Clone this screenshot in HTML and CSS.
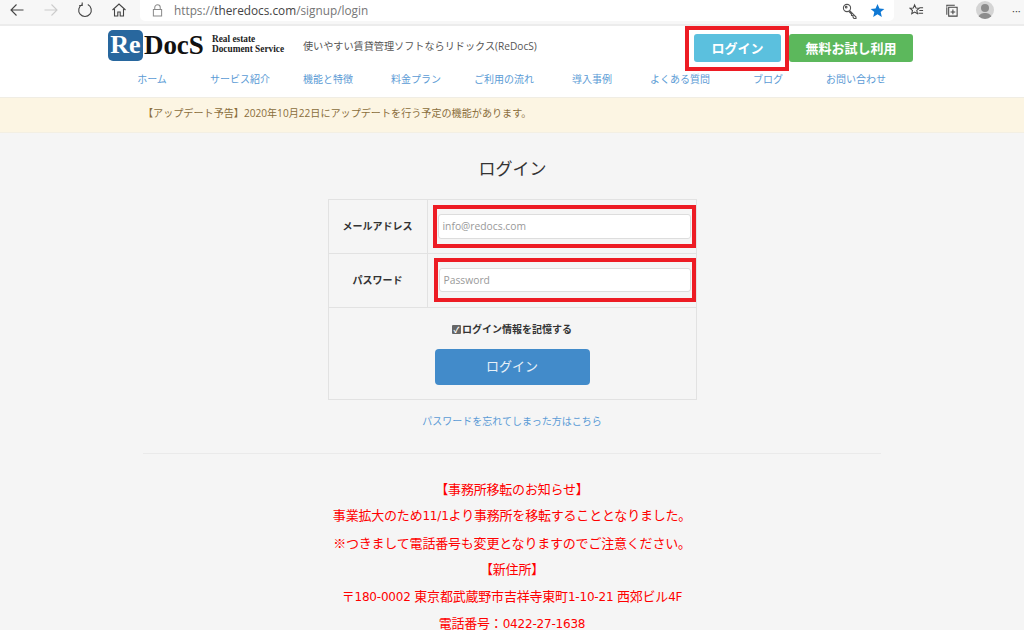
FILE: index.html
```html
<!DOCTYPE html>
<html lang="ja">
<head>
<meta charset="utf-8">
<title>ログイン</title>
<link rel="stylesheet" href="styles.css">
</head>
<body>
<div class="browser">
  <div class="nav-icons">
    <svg class="ico ico-back" viewBox="0 0 16 16"><path d="M14.500 8H2M7.500 2.500 2 8l5.500 5.500"/></svg>
    <svg class="ico ico-fwd" viewBox="0 0 16 16"><path d="M1.500 8H14M8.500 2.500 14 8l-5.500 5.500"/></svg>
    <svg class="ico ico-reload" viewBox="0 0 16 16"><path d="M5.200 2.600A6.300 6.300 0 1 0 10.800 2.600M5.200.5v3h-3"/></svg>
    <svg class="ico ico-home" viewBox="0 0 16 16"><path d="M1.500 8 8 2l6.500 6M3.500 7v7h3.300v-4h2.400v4h3.300V7"/></svg>
  </div>
  <div class="address">
    <svg class="ico-lock" viewBox="0 0 12 14"><path d="M3 6V3.800a3 3 0 0 1 6 0V6M1.500 6h9v7h-9z"/></svg>
    <span class="url">https://<b>theredocs.com</b>/signup/login</span>
    <svg class="ico-key" viewBox="0 0 16 16"><circle cx="5" cy="5" r="3.600"/><circle cx="4.200" cy="4.200" r=".8"/><path d="m7.700 7.700 6.300 6.300v1.500h-2L11 14v-1.500H9.500V11L7 8.500"/></svg>
    <svg class="ico-star" viewBox="0 0 16 16"><path d="m8 1 2.100 4.800 5.200.5-3.900 3.400 1.200 5.100L8 12.100l-4.600 2.700 1.200-5.100L.7 6.300l5.200-.5z"/></svg>
  </div>
  <div class="tools">
    <svg class="ico ico-fav" viewBox="0 0 16 16"><path d="m6 2 1.400 3.300 3.600.3-2.700 2.300.8 3.500L6 9.700 2.900 11.500l.8-3.500L1 5.600l3.600-.3zM11 5h4M11 8h4M10 11h5"/></svg>
    <svg class="ico ico-coll" viewBox="0 0 16 16"><path d="M3 4V2.500h8.500M5 4.500h9V14H5zM3 4.500v8M9.500 7v5M7 9.500h5"/></svg>
    <span class="avatar"><i class="avatar-head"></i><i class="avatar-body"></i></span>
    <span class="more">···</span>
  </div>
</div>

<header class="site-header">
  <div class="header-top">
    <div class="logo">
      <span class="logo-re">Re</span><span class="logo-docs">DocS</span>
      <span class="logo-sub">Real estate<br>Document Service</span>
    </div>
    <p class="tagline">使いやすい賃貸管理ソフトならリドックス(ReDocS)</p>
    <div class="header-buttons">
      <div class="red-frame frame-login"><a class="btn btn-login">ログイン</a></div>
      <a class="btn btn-trial">無料お試し利用</a>
    </div>
  </div>
  <nav class="main-nav">
    <a>ホーム</a><a>サービス紹介</a><a>機能と特徴</a><a>料金プラン</a><a>ご利用の流れ</a><a>導入事例</a><a>よくある質問</a><a>ブログ</a><a>お問い合わせ</a>
  </nav>
</header>

<div class="notice">【アップデート予告】2020年10月22日にアップデートを行う予定の機能があります。</div>

<main class="main">
  <h1 class="title">ログイン</h1>
  <div class="login-table">
    <div class="row">
      <div class="label">メールアドレス</div>
      <div class="field"><div class="red-frame frame-input frame-mail"><div class="input">info@redocs.com</div></div></div>
    </div>
    <div class="row">
      <div class="label">パスワード</div>
      <div class="field"><div class="red-frame frame-input frame-pass"><div class="input input-pass">Password</div></div></div>
    </div>
    <div class="submit-row">
      <div class="remember"><span class="check">✓</span>ログイン情報を記憶する</div>
      <a class="btn-submit">ログイン</a>
    </div>
  </div>
  <a class="forgot">パスワードを忘れてしまった方はこちら</a>
  <hr class="rule">
  <div class="announce">
    <p>【事務所移転のお知らせ】</p>
    <p>事業拡大のため<span class="num">11/1</span>より事務所を移転することとなりました。</p>
    <p>※つきまして電話番号も変更となりますのでご注意ください。</p>
    <p>【新住所】</p>
    <p>〒<span class="num">180-0002 </span>東京都武蔵野市吉祥寺東町<span class="num">1-10-21 </span>西郊ビル<span class="num">4F</span></p>
    <p>電話番号：<span class="num">0422-27-1638</span></p>
  </div>
</main>
</body>
</html>
```

FILE: styles.css
```css
* { box-sizing: border-box; }
html, body { margin: 0; height: 630px; overflow: hidden; }
body {
  background: #f5f5f5;
  color: #333;
  font-family: "Open Sans", "Noto Sans CJK JP", sans-serif;
}
p, h1 { margin: 0; }

/* browser chrome */
.browser {
  height: 26px;
  display: flex;
  background: #f7f7f7;
  border-bottom: 2px solid #ececec;
}
.nav-icons { width: 140px; display: flex; align-items: center; padding-left: 9px; gap: 18px; height: 20px; }
.ico { width: 16px; height: 16px; flex: none; fill: none; stroke: #444; stroke-width: 1.1; }
.ico-fwd { stroke: #ccc; }
.address {
  width: 754px;
  height: 21px;
  background: #fff;
  border-radius: 0 0 5px 5px;
  display: flex;
  align-items: center;
  padding-left: 12px;
}
.ico-lock { width: 11px; height: 13px; fill: none; stroke: #8a8a8a; stroke-width: 1.1; margin-right: 11px; margin-top: -1px; }
.url { font-size: 11.800px; color: #767676; flex: 1; font-family: "Open Sans", sans-serif; margin-top: -1px; }
.url b { font-weight: 400; color: #444; }
.ico-key { width: 16px; height: 16px; fill: none; stroke: #555; stroke-width: 1.1; margin-right: 12px; }
.ico-star { width: 15px; height: 15px; fill: #0f78d4; margin-right: 9px; }
.tools { flex: 1; height: 20px; display: flex; align-items: center; padding-left: 15px; gap: 18px; }
.ico-fav, .ico-coll { width: 15px; height: 15px; }
.ico-coll { margin-left: 2px; }
.avatar {
  width: 18px; height: 18px; border-radius: 50%;
  background: #d4d4d4; overflow: hidden; flex: none;
  display: flex; flex-direction: column; align-items: center;
  margin-left: -1px;
}
.avatar-head { width: 8px; height: 8px; border-radius: 50%; background: #8c8c8c; margin-top: 3px; flex: none; }
.avatar-body { width: 14px; height: 8px; border-radius: 6px 6px 0 0; background: #8c8c8c; margin-top: 1px; flex: none; }
.more { font-size: 11px; color: #444; }

/* header */
.site-header {
  height: 72px;
  background: #fff;
  border-bottom: 1px solid #f0ede4;
  padding-left: 108px;
}
.header-top { height: 45px; display: flex; }
.logo { width: 195px; height: 32px; margin-top: 3px; display: flex; align-items: center; }
.logo-re {
  width: 35px; height: 31px;
  background: #28679e;
  color: #fff;
  border-radius: 5px;
  font: 700 26px/29px "Liberation Serif", serif;
  text-align: center;
  flex: none;
}
.logo-docs { font: 700 27px/30px "Liberation Serif", serif; color: #111; margin-left: 1px; width: 60px; flex: none; letter-spacing: -.1px; white-space: nowrap; }
.logo-sub { font: 700 9.300px/9.600px "Liberation Serif", serif; color: #222; margin-left: 8px; white-space: nowrap; margin-top: -1px; }
.tagline { font-size: 10.150px; color: #555; line-height: 40px; width: 382px; white-space: nowrap; }
.header-buttons { display: flex; align-items: flex-start; }
.red-frame { border: 4px solid #ed1c24; background: #fff; }
.frame-login { width: 104px; height: 45px; padding: 4px 4px 0 5px; }
.btn {
  display: block;
  height: 28px;
  border-radius: 3px;
  color: #fff;
  font-size: 13px;
  font-weight: 700;
  line-height: 28px;
  text-align: center;
}
.btn-login { background: #5bc0de; }
.btn-trial { background: #5cb85c; width: 124px; margin-top: 8px; }
.main-nav { display: grid; grid-template-columns: repeat(9, 88px); }
.main-nav a { font-size: 10px; line-height: 16px; color: #5b9bd5; text-align: center; }

/* notice */
.notice {
  height: 35px;
  background: #fcf5e3;
  border-bottom: 1px solid #f3efe3;
  padding-left: 143px;
  font-size: 10.100px;
  line-height: 31px;
  color: #8a6d3b;
}

/* main */
.main { display: flex; flex-direction: column; align-items: center; }
.title { font-size: 17px; font-weight: 400; line-height: 24px; margin-top: 24px; padding-left: 1px; color: #333; }
.login-table { width: 369px; height: 201px; margin-top: 18px; border: 1px solid #e2e2e2; }
.row { height: 54px; display: flex; border-bottom: 1px solid #e2e2e2; }
.label {
  width: 99px;
  border-right: 1px solid #e2e2e2;
  font-size: 10px;
  font-weight: 700;
  text-align: center;
  line-height: 52px;
}
.field { flex: 1; position: relative; }
.frame-input { position: absolute; background: transparent; }
.frame-mail { left: 5px; top: 5px; width: 263px; height: 43px; padding: 5px 0 0 1px; }
.frame-pass { left: 6px; top: 4px; width: 262px; height: 44px; padding: 6px 0 0 1px; }
.input {
  width: 253px;
  height: 25px;
  background: #fff;
  border: 1px solid #ddd;
  border-radius: 3px;
  padding-left: 4px;
  font-size: 10.300px;
  line-height: 22px;
  color: #999;
}
.input-pass { width: 252px; height: 24px; }
.submit-row { display: flex; flex-direction: column; align-items: center; padding-top: 13px; }
.remember { font-size: 10px; font-weight: 700; line-height: 16px; color: #333; display: flex; align-items: center; }
.check {
  width: 9px; height: 9px;
  background: #666; color: #fff;
  border-radius: 1px;
  font-size: 8px; line-height: 9px;
  text-align: center;
  margin-right: 1px;
}
.btn-submit {
  display: block;
  width: 155px;
  height: 36px;
  margin-top: 12px;
  background: #428bca;
  border-radius: 4px;
  color: #e8f1f8;
  font-size: 13px;
  line-height: 34px;
  text-align: center;
}
.forgot { font-size: 10px; line-height: 16px; margin-top: 13px; color: #5b9bd5; }
.rule { width: 738px; margin: 24px 0 0; border: 0; border-top: 1px solid #eaeaea; }
.announce {
  margin-top: 22px;
  text-align: center;
  color: #f00;
  font-size: 13px;
  letter-spacing: -.2px;
  line-height: 26.400px;
}
.num { font-family: "DejaVu Sans", sans-serif; font-size: 12px; }
```
